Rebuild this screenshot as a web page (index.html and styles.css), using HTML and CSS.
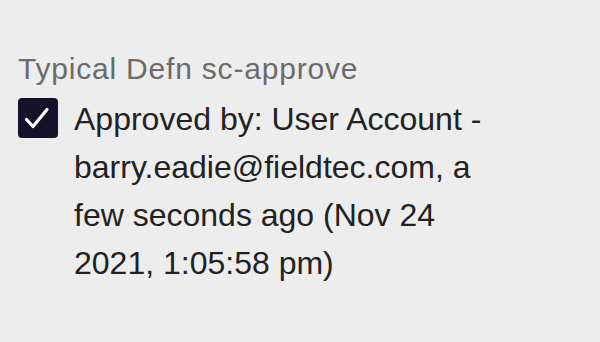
FILE: index.html
```html
<!DOCTYPE html>
<html lang="en">
<head>
    <meta charset="UTF-8">
    <meta name="viewport" content="width=device-width, initial-scale=1.0">
    <title>Approval</title>
    <link rel="stylesheet" href="styles.css">
</head>
<body>
    <div class="field">
        <div class="field-label">Typical Defn sc-approve</div>
        <div class="approve-row">
            <span class="checkbox">
                <svg viewBox="0 0 40 40" width="40" height="40">
                    <path d="M8.5 21.5 L15 28.5 L29 11.5" fill="none" stroke="#fff" stroke-width="3.2" stroke-linecap="round" stroke-linejoin="round"/>
                </svg>
            </span>
            <p class="approve-text">Approved by: User Account - barry.eadie@fieldtec.com, a few seconds ago (Nov 24 2021, 1:05:58 pm)</p>
        </div>
    </div>
</body>
</html>
```

FILE: styles.css
```css
body {
    margin: 0;
    padding: 0;
    background-color: #ededed;
    font-family: "Liberation Sans", Arial, sans-serif;
}
.field {
    padding: 51px 18px 0 18px;
}
.field-label {
    color: #6b6b6b;
    font-size: 30px;
    line-height: 36px;
    letter-spacing: 0.8px;
}
.approve-row {
    display: flex;
    align-items: flex-start;
    gap: 16px;
    margin-top: 8px;
}
.checkbox {
    flex: none;
    width: 40px;
    height: 40px;
    margin-top: 3px;
    background-color: #16112a;
    border-radius: 4px;
}
.checkbox svg {
    display: block;
}
.approve-text {
    margin: 0;
    width: 440px;
    color: #222222;
    font-size: 32px;
    line-height: 48px;
}
```
